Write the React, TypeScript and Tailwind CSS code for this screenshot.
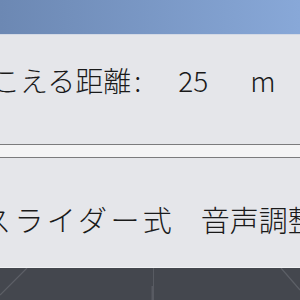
import React from "react";

export default function App() {
  return (
    <div
      className="w-[300px] h-[300px] overflow-hidden flex flex-col bg-[#44474e] text-[#1a1a1a]"
      style={{ fontFamily: '"Noto Sans CJK JP", "Noto Sans", sans-serif' }}
    >
      <div className="h-[34px] shrink-0 bg-gradient-to-r from-[#6c88b3] to-[#88a8d8]" />
      <div className="h-[110px] shrink-0 bg-[#e5e6ea] border-t border-[#d3d9e5] pt-[31px] whitespace-nowrap">
        <div className="ml-[-36px] text-[28px] leading-[28px] font-light flex">
          <span>聞こえる距離</span>
          <span className="ml-[3px]">:</span>
          <span className="ml-[37px]">25</span>
          <span className="ml-[42px]">m</span>
        </div>
      </div>
      <div className="h-[14px] shrink-0 bg-[#f4f4f5] border-y border-[#7b7b7d]" />
      <div className="h-[110px] shrink-0 bg-[#e5e6ea] border-b border-[#f1f2f4] pt-[47px] whitespace-nowrap">
        <div className="ml-[-18px] text-[29px] leading-[29px] font-light flex">
          <span className="tracking-[3.4px]">スライダー</span>
          <span>式　音声調整</span>
        </div>
      </div>
      <div className="flex-1 relative">
        <svg width="300" height="32" className="absolute inset-0">
          <line x1="0" y1="27" x2="27" y2="0" stroke="#5d6067" strokeWidth="1.2" />
          <line x1="281" y1="0" x2="300" y2="22" stroke="#5d6067" strokeWidth="1.2" />
          <line x1="153.5" y1="0" x2="153.5" y2="32" stroke="#585b62" strokeWidth="1" />
          <line x1="152.5" y1="18" x2="152.5" y2="32" stroke="#585b62" strokeWidth="2" />
        </svg>
      </div>
    </div>
  );
}
